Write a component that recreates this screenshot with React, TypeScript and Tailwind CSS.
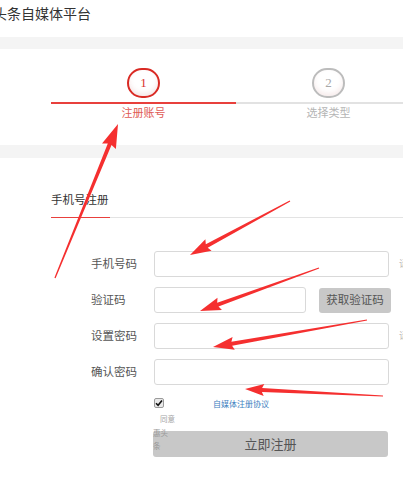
import React from "react";

type Arrow = { x1: number; y1: number; x2: number; y2: number; head: number; width: number };

// red annotation arrows drawn over the screenshot
const arrows: Arrow[] = [
  { x1: 55, y1: 278, x2: 118, y2: 124, head: 22, width: 15 },
  { x1: 290, y1: 201, x2: 190, y2: 255, head: 19, width: 13 },
  { x1: 319, y1: 268, x2: 200, y2: 311, head: 19, width: 13 },
  { x1: 367, y1: 320, x2: 213, y2: 347, head: 19, width: 13 },
  { x1: 383, y1: 396, x2: 245, y2: 389, head: 17, width: 12 },
];

function arrowPoints(a: Arrow) {
  const dx = a.x2 - a.x1;
  const dy = a.y2 - a.y1;
  const len = Math.hypot(dx, dy);
  const ux = dx / len;
  const uy = dy / len;
  const nx = -uy;
  const ny = ux;
  const bx = a.x2 - ux * a.head;
  const by = a.y2 - uy * a.head;
  const w0 = 0.6;
  const w1 = 2;
  const pts = [
    [a.x1 + nx * w0, a.y1 + ny * w0],
    [bx + nx * w1, by + ny * w1],
    [bx + nx * (a.width / 2) - ux * 2, by + ny * (a.width / 2) - uy * 2],
    [a.x2, a.y2],
    [bx - nx * (a.width / 2) - ux * 2, by - ny * (a.width / 2) - uy * 2],
    [bx - nx * w1, by - ny * w1],
    [a.x1 - nx * w0, a.y1 - ny * w0],
  ];
  return pts.map((p) => `${p[0].toFixed(1)},${p[1].toFixed(1)}`).join(" ");
}

function Step({ n, label, active }: { n: number; label: string; active: boolean }) {
  return (
    <div className="w-[185px] shrink-0 flex flex-col items-center">
      <div
        className={
          active
            ? "w-[33px] h-[30px] rounded-full border-[2.5px] border-[#d92a24] bg-white shadow-[inset_0_-3px_5px_rgba(200,120,120,0.18)] flex items-center justify-center text-[13px] text-[#d9342f] font-['Liberation_Serif',serif]"
            : "w-[33px] h-[30px] rounded-full border-[2.5px] border-[#bcbcbc] bg-white shadow-[inset_0_-3px_5px_rgba(200,120,120,0.14)] flex items-center justify-center text-[13px] text-[#a8a8a8] font-['Liberation_Serif',serif]"
        }
      >
        {n}
      </div>
      <div className={active ? "mt-[4px] w-full h-[2px] bg-[#e8403c]" : "mt-[4px] w-full h-[2px] bg-[#e2e2e2]"} />
      <div className={active ? "mt-[2px] text-[11px] leading-[13px] text-[#e05a55]" : "mt-[2px] text-[11px] leading-[13px] text-[#b5b5b5]"}>
        {label}
      </div>
    </div>
  );
}

function Row({ label, hint }: { label: string; hint?: string }) {
  return (
    <div className="flex items-center h-[26px]">
      <div className="w-[63px] shrink-0 text-[11.5px] text-[#555]">{label}</div>
      <div className="w-[235px] h-[26px] shrink-0 border border-[#d9d9d9] rounded-[3px] bg-white" />
      {hint && <div className="ml-[10px] text-[9px] text-[#bbb] whitespace-nowrap">{hint}</div>}
    </div>
  );
}

export default function App() {
  return (
    <div className="relative w-[403px] h-[500px] overflow-hidden bg-white font-['Noto_Sans_CJK_SC','Noto_Sans',sans-serif]">

      {/* HEADER */}
      <div className="h-[37px] pt-[5px]">
        <div className="ml-[-7px] text-[14px] leading-[17px] text-[#333] whitespace-nowrap">头条自媒体平台</div>
      </div>

      <div className="h-[12px] bg-[#f4f4f4]" />

      {/* STEPS */}
      <div className="h-[96px] pt-[19px] pl-[51px] flex">
        <Step n={1} label="注册账号" active />
        <Step n={2} label="选择类型" active={false} />
      </div>

      <div className="h-[13px] bg-[#f4f4f4]" />

      {/* FORM */}
      <div className="pl-[51px] pt-[33px]">
        <div className="flex border-b border-[#e3e3e3]">
          <div className="w-[59px] pb-[10px] -mb-px border-b border-[#e8403c] text-[11.5px] leading-[16px] text-[#333] whitespace-nowrap">
            手机号注册
          </div>
        </div>
      </div>

      <div className="pl-[91px] pt-[33px] flex flex-col gap-[10px]">
        <Row label="手机号码" hint="请输入手机号" />
        <div className="flex items-center h-[26px]">
          <div className="w-[63px] shrink-0 text-[11.5px] text-[#555]">验证码</div>
          <div className="w-[152px] h-[26px] shrink-0 border border-[#d9d9d9] rounded-[3px] bg-white" />
          <div className="ml-[13px] w-[72px] h-[25px] shrink-0 rounded-[3px] bg-[#c8c8c8] flex items-center justify-center text-[11.5px] text-[#555]">
            获取验证码
          </div>
        </div>
        <Row label="设置密码" hint="请设置密码" />
        <Row label="确认密码" />
      </div>

      {/* AGREEMENT */}
      <div className="ml-[154px] mt-[13px] flex items-start h-[10px]">
        <div className="w-[10px] h-[10px] rounded-[2px] border border-[#9a9a9a] bg-[#e9e9e9] flex items-center justify-center">
          <svg width="8" height="8" viewBox="0 0 8 8">
            <path d="M1 4.2 L3.1 6.3 L7 1.5" fill="none" stroke="#111" strokeWidth="1.6" />
          </svg>
        </div>
        <div className="ml-[49px] mt-[1px] text-[8px] leading-[10px] text-[#3d7fc0] whitespace-nowrap">自媒体注册协议</div>
      </div>

      <div className="relative z-10 h-[23px] ml-[153px] pt-[4px] text-[7.5px] leading-[13.5px] text-[#a5a5a5]">
        <div className="pl-[7px]">同意</div>
        <div className="text-[#999]">惠头</div>
        <div className="text-[#999]">条</div>
      </div>

      <div className="ml-[153px] w-[235px] h-[26px] rounded-[3px] bg-[#c8c8c8] flex items-center justify-center text-[13px] text-[#555]">
        立即注册
      </div>

      {/* ANNOTATION ARROWS */}
      <svg className="absolute inset-0 z-20 pointer-events-none" width="403" height="500" viewBox="0 0 403 500">
        {arrows.map((a, i) => (
          <polygon key={i} points={arrowPoints(a)} fill="#f52f2f" />
        ))}
      </svg>

    </div>
  );
}
